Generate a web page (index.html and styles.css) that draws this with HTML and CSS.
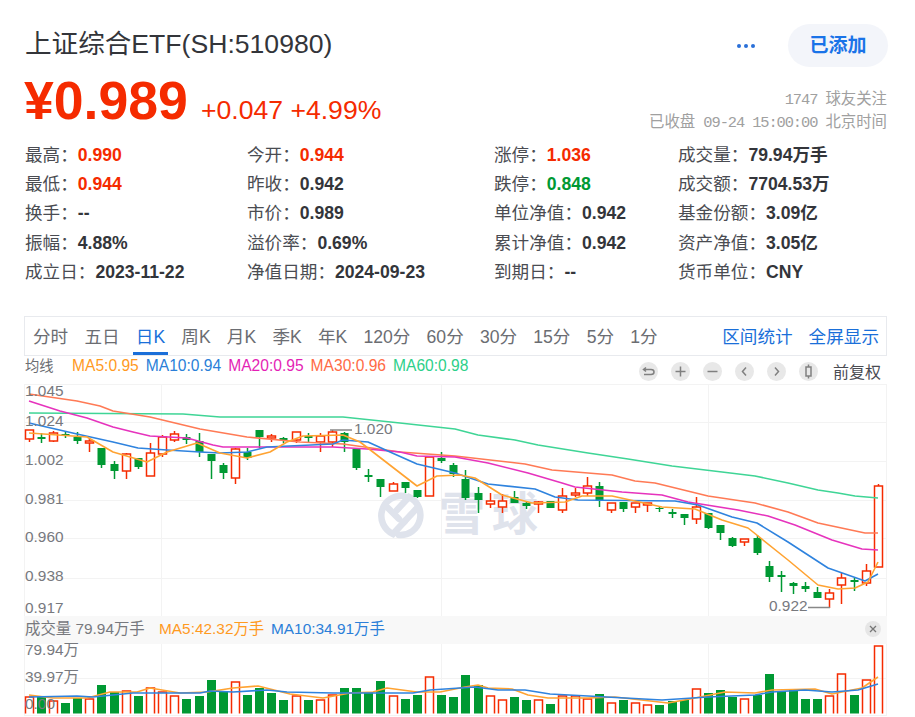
FILE: index.html
```html
<!DOCTYPE html>
<html lang="zh-CN">
<head>
    <meta charset="UTF-8">
    <title>上证综合ETF(SH:510980)</title>
    <link rel="stylesheet" href="styles.css">
</head>
<body>
    <div class="page">
        <div class="head">
            <h1 class="title">上证综合ETF(SH:510980)</h1>
            <div class="actions">
                <span class="more"><i></i><i></i><i></i></span>
                <span class="added">已添加</span>
            </div>
        </div>

        <div class="quote">
            <div class="price-box">
                <span class="price">¥0.989</span>
                <span class="change">+0.047 +4.99%</span>
            </div>
            <div class="meta">
                <div><span class="mono">1747 </span>球友关注</div>
                <div>已收盘<span class="mono"> 09-24 15:00:00 </span>北京时间</div>
            </div>
        </div>

        <div class="stats">
            <div>最高：<b class="up">0.990</b></div>
            <div>今开：<b class="up">0.944</b></div>
            <div>涨停：<b class="up">1.036</b></div>
            <div>成交量：<b>79.94万手</b></div>
            <div>最低：<b class="up">0.944</b></div>
            <div>昨收：<b>0.942</b></div>
            <div>跌停：<b class="down">0.848</b></div>
            <div>成交额：<b>7704.53万</b></div>
            <div>换手：<b>--</b></div>
            <div>市价：<b>0.989</b></div>
            <div>单位净值：<b>0.942</b></div>
            <div>基金份额：<b>3.09亿</b></div>
            <div>振幅：<b>4.88%</b></div>
            <div>溢价率：<b>0.69%</b></div>
            <div>累计净值：<b>0.942</b></div>
            <div>资产净值：<b>3.05亿</b></div>
            <div>成立日：<b>2023-11-22</b></div>
            <div>净值日期：<b>2024-09-23</b></div>
            <div>到期日：<b>--</b></div>
            <div>货币单位：<b>CNY</b></div>
        </div>

        <div class="tabs">
            <div class="tab-list">
                <span class="tab">分时</span>
                <span class="tab">五日</span>
                <span class="tab active">日K</span>
                <span class="tab">周K</span>
                <span class="tab">月K</span>
                <span class="tab">季K</span>
                <span class="tab">年K</span>
                <span class="tab">120分</span>
                <span class="tab">60分</span>
                <span class="tab">30分</span>
                <span class="tab">15分</span>
                <span class="tab">5分</span>
                <span class="tab">1分</span>
            </div>
            <div class="tab-links">
                <span>区间统计</span>
                <span>全屏显示</span>
            </div>
        </div>

        <div class="ma-row">
            <div class="legend">
                <span class="legend-name">均线</span>
                <span class="c-ma5">MA5:0.95</span>
                <span class="c-ma10">MA10:0.94</span>
                <span class="c-ma20">MA20:0.95</span>
                <span class="c-ma30">MA30:0.96</span>
                <span class="c-ma60">MA60:0.98</span>
            </div>
            <div class="tools">
                <span class="tool"><svg viewBox="0 0 19 19"><path d="M7 5.5L4.5 7.5L7 9.5M5 7.5H12Q15 7.5 15 10Q15 12.5 12 12.5H5"/></svg></span>
                <span class="tool"><svg viewBox="0 0 19 19"><path d="M9.5 4.5V14.5M4.5 9.5H14.5"/></svg></span>
                <span class="tool"><svg viewBox="0 0 19 19"><path d="M4.5 9.5H14.5"/></svg></span>
                <span class="tool"><svg viewBox="0 0 19 19"><path d="M11 5.5L7.5 9.5L11 13.5"/></svg></span>
                <span class="tool"><svg viewBox="0 0 19 19"><path d="M8 5.5L11.5 9.5L8 13.5"/></svg></span>
                <span class="tool"><svg viewBox="0 0 19 19"><path d="M9.5 2.5V5M9.5 14V16.5M7 5H12V14H7Z"/></svg></span>
                <span class="fq">前复权</span>
            </div>
        </div>

        <!-- viewBox uses page coordinates, so the data in chart.js reads straight off the screen -->
        <svg class="chart" viewBox="24 384 863 333">
            <g class="grid">
                <path d="M24 384.5H887M24 422.5H887M24 461.5H887M24 500.5H887M24 538.5H887M24 578.5H887M24 678.5H887M24 715.5H887"/>
                <path d="M161.5 384V716M441.5 384V716M708.5 384V716M886.5 384V716M24.5 384V716"/>
            </g>
            <g class="mark">
                <path d="M404 496A20 20 0 0 0 393 534L405 521M399 535A20 20 0 0 0 409 497L397 510"/>
                <path d="M387 507L399 519M417 508L404 522"/>
            </g>
            <text class="mark-text" x="439" y="530">雪球</text>
            <rect class="vol-band" x="24" y="616" width="863" height="28"/>
            <g id="candles"></g>
            <g id="volumes"></g>
            <g id="lines"></g>
            <path class="leader" d="M330 430H352M808 607.5H830"/>
            <g class="axis">
                <text x="25" y="396">1.045</text>
                <text x="25" y="426">1.024</text>
                <text x="25" y="465">1.002</text>
                <text x="25" y="504">0.981</text>
                <text x="25" y="542">0.960</text>
                <text x="25" y="581">0.938</text>
                <text x="25" y="613">0.917</text>
                <text x="354" y="434">1.020</text>
                <text x="769" y="611">0.922</text>
                <text x="25" y="655">79.94万</text>
                <text x="25" y="682">39.97万</text>
                <text x="25" y="709">0.00</text>
            </g>
            <g class="vol-legend">
                <text x="25" y="634">成交量 79.94万手</text>
                <text class="t-ma5" x="159" y="634">MA5:42.32万手</text>
                <text class="t-ma10" x="271" y="634">MA10:34.91万手</text>
            </g>
            <circle class="close" cx="873" cy="629" r="8"/>
            <path class="close-x" d="M870 626L876 632M876 626L870 632"/>
        </svg>
    </div>
    <script src="chart.js"></script>
</body>
</html>
```

FILE: styles.css
```css
* {
    box-sizing: border-box;
}
html, body {
    margin: 0;
    padding: 0;
    height: 717px;
    overflow: hidden;
    background-color: #fff;
}
body {
    font-family: "Liberation Sans", "Noto Sans CJK SC", sans-serif;
    color: #33353a;
}
.page {
    padding: 24px 28px 0 24px;
}

.head {
    display: flex;
    justify-content: space-between;
    align-items: flex-start;
    height: 43px;
}
.title {
    margin: 0;
    padding: 1px 0 0 1px;
    line-height: 38px;
    font-size: 26.6px;
    font-weight: normal;
}
.actions {
    display: flex;
    align-items: center;
}
.more {
    display: flex;
    gap: 3px;
    margin-right: 33px;
}
.more i {
    width: 4px;
    height: 4px;
    border-radius: 50%;
    background-color: #2a70d8;
}
.added {
    width: 100px;
    height: 43px;
    margin-right: -1px;
    line-height: 43px;
    text-align: center;
    font-size: 19px;
    font-weight: bold;
    color: #1a73e8;
    background-color: #f3f5fa;
    border-radius: 22px;
}

.quote {
    display: flex;
    justify-content: space-between;
    height: 70.5px;
    margin-top: 3px;
}
.price-box {
    display: flex;
    align-items: baseline;
    gap: 13px;
}
.price {
    line-height: 60px;
    font-size: 53.6px;
    font-weight: bold;
    color: #f52b00;
}
.change {
    font-size: 26.6px;
    color: #f52b00;
}
.meta {
    padding-top: 18px;
    line-height: 22px;
    font-size: 15.4px;
    text-align: right;
    color: #a0a0a0;
}
.mono {
    font-family: "Liberation Mono", monospace;
    letter-spacing: -1.1px;
    white-space: pre;
}

.stats {
    display: grid;
    grid-template-columns: 222px 247px 184px 1fr;
    grid-auto-rows: 29.4px;
    padding-left: 1px;
    line-height: 29.4px;
    font-size: 17.6px;
    color: #4a4c52;
}
.stats b {
    color: #33353a;
}
.stats .up {
    color: #f52b00;
}
.stats .down {
    color: #009933;
}

.tabs {
    display: flex;
    justify-content: space-between;
    height: 40px;
    margin-top: 28.5px;
    padding: 0 7px 0 5px;
    border: 1px solid #e8eaee;
    font-size: 17.6px;
}
.tab-list {
    display: flex;
    gap: 10.2px;
}
.tab {
    height: 38px;
    padding: 0 3px;
    line-height: 40px;
    color: #6b6d72;
    border-bottom: 3px solid transparent;
}
.tab.active {
    color: #1a6fd9;
    border-bottom-color: #1a6fd9;
}
.tab-links {
    display: flex;
    gap: 16px;
    line-height: 40px;
    color: #1a6fd9;
}

.ma-row {
    display: flex;
    justify-content: space-between;
    height: 28px;
}
.legend {
    display: flex;
    gap: 7px;
    padding-left: 1px;
    line-height: 20px;
    font-size: 15.6px;
}
.legend-name {
    width: 40px;
    font-size: 14.3px;
    color: #6b6d72;
}
.c-ma5 { color: #ff9a1f; }
.c-ma10 { color: #2b7fd8; }
.c-ma20 { color: #e41fb5; }
.c-ma30 { color: #ff6b45; }
.c-ma60 { color: #2dd08a; }
.tools {
    display: flex;
    align-items: center;
    gap: 13px;
    padding: 3px 6px 0 0;
}
.tool {
    width: 19px;
    height: 19px;
    border-radius: 50%;
    background-color: #e8e8e8;
}
.tool svg {
    display: block;
    fill: none;
    stroke: #808080;
    stroke-width: 1.5;
}
.fq {
    margin-left: 2px;
    font-size: 16px;
    color: #4a4c52;
}

.chart {
    display: block;
    width: 863px;
    height: 333px;
    overflow: visible;
}
.grid path {
    fill: none;
    stroke: #f3f3f3;
    stroke-width: 1;
}
.mark path {
    fill: none;
    stroke: #dfe3ec;
    stroke-width: 6.5;
    stroke-linecap: round;
}
.mark-text {
    font-size: 46px;
    font-weight: bold;
    letter-spacing: 7px;
    fill: #dfe3ec;
}
.vol-band {
    fill: #f8f8f8;
}
.leader {
    fill: none;
    stroke: #888;
    stroke-width: 1.5;
}
.axis text {
    font-size: 15.4px;
    fill: #77797e;
}
.vol-legend text {
    font-size: 15.4px;
    fill: #77797e;
}
.vol-legend .t-ma5 { fill: #ff9a1f; }
.vol-legend .t-ma10 { fill: #2b7fd8; }
.close {
    fill: #e6e6e6;
}
.close-x {
    fill: none;
    stroke: #777;
    stroke-width: 1.3;
}
.wick-up, .wick-down {
    stroke-width: 1.5;
}
.wick-up, .body-up {
    stroke: #f52b00;
}
.wick-down {
    stroke: #009933;
}
.body-up {
    fill: #fff;
    stroke-width: 1.5;
}
.body-down {
    fill: #009933;
}
.bar-up {
    fill: none;
    stroke: #f52b00;
    stroke-width: 1.5;
}
.bar-down {
    fill: #009933;
}
.line {
    fill: none;
    stroke-width: 1.6;
    stroke-linejoin: round;
}
.l-ma5 { stroke: #ffa332; }
.l-ma10 { stroke: #2f83de; }
.l-ma20 { stroke: #e633bd; }
.l-ma30 { stroke: #ff7a55; }
.l-ma60 { stroke: #3fd596; }
```

FILE: chart.js
```js
const NS = 'http://www.w3.org/2000/svg';

function add(parent, tag, cls, attrs) {
    const el = document.createElementNS(NS, tag);
    el.setAttribute('class', cls);
    for (const key in attrs) el.setAttribute(key, attrs[key]);
    parent.appendChild(el);
    return el;
}

// x of candle i, in page pixels
function xAt(i) {
    return 28.7 + 12.13 * i;
}

// [r|g, high, body top, body bottom, low]
const candles = [
    ['r',430,430,439,442], ['g',433,437,439,443], ['r',431,433,441,442], ['g',432,434,436,438],
    ['g',432,437,441,444], ['r',439,441,443,452], ['g',448,448,465,468], ['g',461,464,471,479],
    ['r',453,454,471,479], ['g',458,458,467,469], ['r',443,453,476,476], ['r',435,437,454,457],
    ['r',431,434,440,442], ['g',434,437,440,444], ['g',433,441,452,457], ['g',454,454,461,479],
    ['g',463,465,473,479], ['r',448,449,478,484], ['g',448,452,458,460], ['g',430,430,437,448],
    ['r',434,436,438,442], ['g',437,438,440,443], ['r',432,432,440,443], ['g',433,436,438,442],
    ['r',433,436,442,452], ['r',430,432,442,447], ['g',432,433,442,452], ['g',449,449,468,470],
    ['g',469,475,477,482], ['g',479,479,487,497], ['r',482,484,491,491], ['g',482,482,488,493],
    ['g',490,490,497,498], ['r',457,457,496,496], ['g',452,458,461,463], ['g',463,465,474,477],
    ['g',470,479,498,500], ['g',487,493,500,513], ['r',493,501,504,508], ['r',494,501,507,513],
    ['g',491,497,503,503], ['g',501,503,506,509], ['r',501,502,504,513], ['g',501,501,508,508],
    ['r',488,496,510,513], ['r',488,493,495,497], ['r',477,486,493,496], ['g',482,486,501,507],
    ['r',503,503,510,513], ['g',502,502,509,512], ['r',503,503,507,513], ['r',503,503,505,512],
    ['g',506,508,509,512], ['g',509,512,514,518], ['g',514,514,518,525], ['r',497,507,519,524],
    ['g',513,513,528,529], ['g',525,525,533,540], ['g',537,538,546,547], ['r',539,539,542,546],
    ['g',535,538,553,555], ['g',561,566,577,582], ['g',571,575,577,592], ['g',582,583,586,594],
    ['g',582,586,589,592], ['g',587,592,598,598], ['r',589,593,599,608], ['r',573,578,585,604],
    ['g',578,580,582,591], ['r',564,571,583,586], ['r',484,486,567,567]
];

const candleBox = document.getElementById('candles');
candles.forEach((c, i) => {
    const x = Math.round(xAt(i)) + 0.5;
    const up = c[0] === 'r';
    add(candleBox, 'line', up ? 'wick-up' : 'wick-down', { x1: x, x2: x, y1: c[1], y2: c[4] });
    add(candleBox, 'rect', up ? 'body-up' : 'body-down', {
        x: x - 4, y: c[2], width: 8, height: c[3] - c[2]
    });
});

const volTops = [
    697,696,701,703,698,699,685,692,691,696,688,692,696,699,696,680,692,682,695,688,693,700,696,700,
    700,695,688,688,692,681,696,699,695,677,695,697,675,685,696,700,697,700,700,704,696,696,699,694,
    703,700,703,705,705,701,700,689,693,690,697,699,695,674,691,690,699,699,696,674,695,680,646
];
const volKinds = 'rgrggrggrg' + 'rrrggggrgg' + 'ggrgrrgggg' + 'rggrggggrr' +
    'ggrgrrrgrg' + 'rrgggrgggr' + 'ggggggrrgrr';

const volBox = document.getElementById('volumes');
volTops.forEach((top, i) => {
    const x = Math.round(xAt(i)) + 0.5;
    if (volKinds[i] === 'r') {
        add(volBox, 'path', 'bar-up', { d: `M${x - 4} 713.5V${top}H${x + 4}V713.5` });
    } else {
        add(volBox, 'rect', 'bar-down', { x: x - 4.5, y: top, width: 9, height: 713.5 - top });
    }
});

const lines = {
    'l-ma60': [[29,413],[183,414],[220,417],[343,417],[400,423],[455,429],[478,435],[515,440],[538,445],[588,453],[628,459],[672,466],[722,472],[755,476],[788,483],[818,490],[838,493],[855,496],[878,498]],
    'l-ma30': [[29,394],[77,401],[100,406],[113,411],[150,417],[200,429],[247,437],[300,442],[343,444],[400,452],[455,456],[525,464],[552,470],[588,473],[612,475],[635,481],[655,483],[708,496],[755,503],[788,512],[818,523],[865,533],[878,533]],
    'l-ma20': [[29,401],[60,411],[87,418],[113,427],[133,432],[150,436],[187,438],[213,445],[223,447],[267,447],[333,447],[367,449],[400,452],[417,456],[455,457],[488,463],[528,473],[562,483],[575,487],[622,492],[662,495],[688,502],[738,510],[768,516],[795,525],[832,540],[862,549],[878,550]],
    'l-ma10': [[29,423],[77,434],[113,442],[138,448],[167,450],[200,452],[220,453],[247,452],[267,447],[333,444],[343,440],[368,442],[390,452],[417,464],[455,473],[488,484],[535,489],[555,497],[578,500],[675,501],[698,505],[732,517],[757,523],[788,542],[828,568],[865,581],[878,574]],
    'l-ma5': [[29,433],[87,437],[113,452],[147,462],[167,452],[197,443],[220,453],[247,458],[270,452],[287,442],[303,436],[343,435],[360,442],[417,486],[437,476],[460,475],[475,478],[502,495],[532,503],[565,502],[582,496],[612,496],[662,507],[695,509],[722,520],[748,528],[788,560],[818,585],[838,589],[855,588],[868,582],[878,562]]
};
const volLines = {
    'l-ma5': [[29,695],[53,698],[87,698],[110,692],[137,692],[150,688],[180,693],[207,692],[233,688],[258,686],[290,694],[323,698],[350,693],[373,692],[387,688],[417,692],[440,692],[465,687],[478,685],[488,688],[512,689],[528,695],[548,698],[588,698],[615,697],[668,703],[695,698],[725,692],[755,693],[772,690],[815,689],[832,694],[862,688],[878,677]],
    'l-ma10': [[29,697],[77,696],[93,697],[133,693],[200,693],[210,691],[233,692],[267,690],[287,692],[333,693],[367,693],[413,693],[430,690],[475,687],[498,690],[525,690],[550,694],[588,696],[662,700],[708,697],[755,695],[772,692],[805,690],[832,692],[858,690],[878,684]]
};

const lineBox = document.getElementById('lines');
[lines, volLines].forEach((set) => {
    Object.keys(set).forEach((name) => {
        add(lineBox, 'polyline', 'line ' + name, {
            points: set[name].map((p) => p.join(',')).join(' ')
        });
    });
});
```
